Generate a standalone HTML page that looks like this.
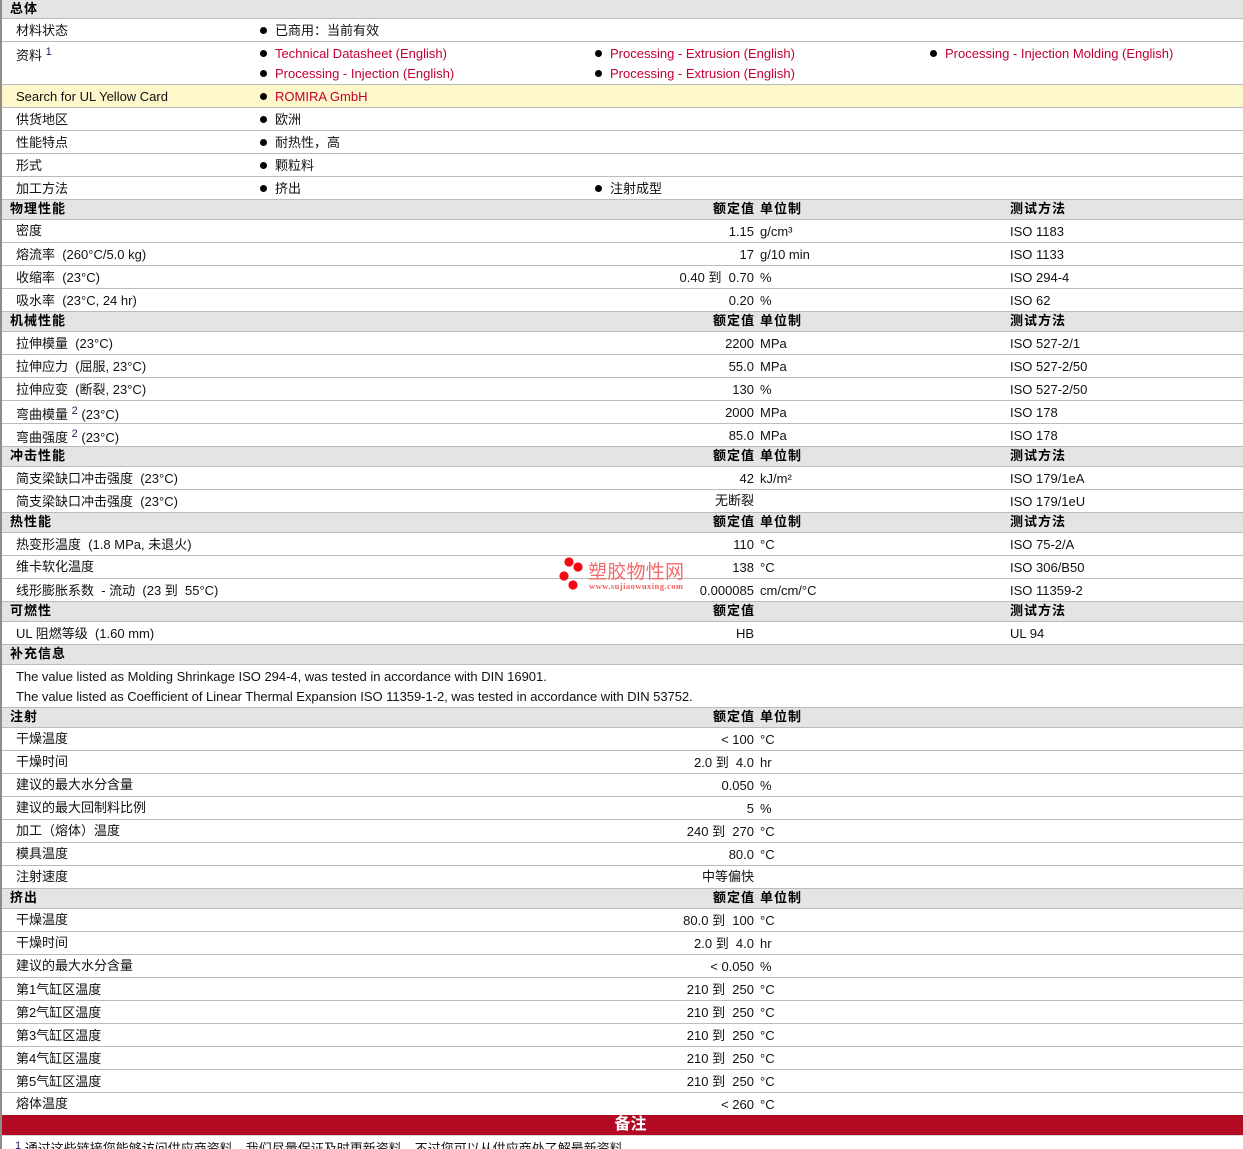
<!DOCTYPE html>
<html><head><meta charset="utf-8"><style>
html,body{margin:0;padding:0;background:#fff}
#p{position:relative;width:1243px;height:1149px;overflow:hidden;background:#fff;font:13px/22px "Liberation Sans","WenQuanYi Zen Hei","Noto Sans CJK SC",sans-serif;color:#111}
#b{position:absolute;left:0;top:0;width:2px;height:1149px;background:#8e8e86;z-index:5}
.r{position:absolute;left:2px;right:0;border-bottom:1px solid #bbb;box-sizing:border-box;white-space:pre}
.h{background:#e4e4e4;font-weight:bold;color:#000;letter-spacing:1px}
.r>span{position:absolute;top:1px}
.h>span,.r>.k{top:0}
.l{left:14px}.t{left:8px}
.v{right:489px;text-align:right}
.h>.v{right:488px}
.u{left:758px}.m{left:1008px}
.c1{left:273px}.c2{left:608px}.c3{left:943px}
i.d{position:absolute;width:7px;height:7px;border-radius:50%;background:#000}
a{color:#c20030;text-decoration:none}
sup{font-size:11px;line-height:0;vertical-align:5px;color:#1a1a66}
</style></head><body><div id="p">
<div id="b"></div>

<div class="r h" style="top:0;height:19px;line-height:17px"><span class="t">总体</span></div>
<div class="r" style="top:19px;height:23px"><span class="l">材料状态</span><i class="d" style="left:258px;top:8px"></i><span class="c1">已商用：当前有效</span></div>
<div class="r" style="top:42px;height:43px"><span class="l" style="top:3px">资料 <sup>1</sup></span><i class="d" style="left:258px;top:8px"></i><span class="c1"><a>Technical Datasheet (English)</a></span><i class="d" style="left:593px;top:8px"></i><span class="c2"><a>Processing - Extrusion (English)</a></span><i class="d" style="left:928px;top:8px"></i><span class="c3"><a>Processing - Injection Molding (English)</a></span><i class="d" style="left:258px;top:28px"></i><span class="c1" style="top:21px"><a>Processing - Injection (English)</a></span><i class="d" style="left:593px;top:28px"></i><span class="c2" style="top:21px"><a>Processing - Extrusion (English)</a></span></div>
<div class="r" style="top:85px;height:23px;background:#fdf7cb"><span class="l">Search for UL Yellow Card</span><i class="d" style="left:258px;top:8px"></i><span class="c1"><a>ROMIRA GmbH</a></span></div>
<div class="r" style="top:108px;height:23px"><span class="l">供货地区</span><i class="d" style="left:258px;top:8px"></i><span class="c1">欧洲</span></div>
<div class="r" style="top:131px;height:23px"><span class="l">性能特点</span><i class="d" style="left:258px;top:8px"></i><span class="c1">耐热性，高</span></div>
<div class="r" style="top:154px;height:23px"><span class="l">形式</span><i class="d" style="left:258px;top:8px"></i><span class="c1">颗粒料</span></div>
<div class="r" style="top:177px;height:23px"><span class="l">加工方法</span><i class="d" style="left:258px;top:8px"></i><span class="c1">挤出</span><i class="d" style="left:593px;top:8px"></i><span class="c2">注射成型</span></div>

<div class="r h" style="top:200px;height:20px;line-height:18px"><span class="t">物理性能</span><span class="v">额定值</span><span class="u">单位制</span><span class="m">测试方法</span></div>
<div class="r" style="top:220px;height:23px"><span class="l k">密度</span><span class="v">1.15</span><span class="u">g/cm³</span><span class="m">ISO 1183</span></div>
<div class="r" style="top:243px;height:23px"><span class="l">熔流率  (260°C/5.0 kg)</span><span class="v">17</span><span class="u">g/10 min</span><span class="m">ISO 1133</span></div>
<div class="r" style="top:266px;height:23px"><span class="l">收缩率  (23°C)</span><span class="v">0.40 到  0.70</span><span class="u">%</span><span class="m">ISO 294-4</span></div>
<div class="r" style="top:289px;height:23px"><span class="l">吸水率  (23°C, 24 hr)</span><span class="v">0.20</span><span class="u">%</span><span class="m">ISO 62</span></div>

<div class="r h" style="top:312px;height:20px;line-height:18px"><span class="t">机械性能</span><span class="v">额定值</span><span class="u">单位制</span><span class="m">测试方法</span></div>
<div class="r" style="top:332px;height:23px"><span class="l">拉伸模量  (23°C)</span><span class="v">2200</span><span class="u">MPa</span><span class="m">ISO 527-2/1</span></div>
<div class="r" style="top:355px;height:23px"><span class="l">拉伸应力  (屈服, 23°C)</span><span class="v">55.0</span><span class="u">MPa</span><span class="m">ISO 527-2/50</span></div>
<div class="r" style="top:378px;height:23px"><span class="l">拉伸应变  (断裂, 23°C)</span><span class="v">130</span><span class="u">%</span><span class="m">ISO 527-2/50</span></div>
<div class="r" style="top:401px;height:23px"><span class="l" style="top:3px">弯曲模量 <sup>2</sup> (23°C)</span><span class="v">2000</span><span class="u">MPa</span><span class="m">ISO 178</span></div>
<div class="r" style="top:424px;height:23px"><span class="l" style="top:3px">弯曲强度 <sup>2</sup> (23°C)</span><span class="v">85.0</span><span class="u">MPa</span><span class="m">ISO 178</span></div>

<div class="r h" style="top:447px;height:20px;line-height:18px"><span class="t">冲击性能</span><span class="v">额定值</span><span class="u">单位制</span><span class="m">测试方法</span></div>
<div class="r" style="top:467px;height:23px"><span class="l">简支梁缺口冲击强度  (23°C)</span><span class="v">42</span><span class="u">kJ/m²</span><span class="m">ISO 179/1eA</span></div>
<div class="r" style="top:490px;height:23px"><span class="l">简支梁缺口冲击强度  (23°C)</span><span class="v k">无断裂</span><span class="m">ISO 179/1eU</span></div>

<div class="r h" style="top:513px;height:20px;line-height:18px"><span class="t">热性能</span><span class="v">额定值</span><span class="u">单位制</span><span class="m">测试方法</span></div>
<div class="r" style="top:533px;height:23px"><span class="l">热变形温度  (1.8 MPa, 未退火)</span><span class="v">110</span><span class="u">°C</span><span class="m">ISO 75-2/A</span></div>
<div class="r" style="top:556px;height:23px"><span class="l k">维卡软化温度</span><span class="v">138</span><span class="u">°C</span><span class="m">ISO 306/B50</span></div>
<div class="r" style="top:579px;height:23px"><span class="l">线形膨胀系数  - 流动  (23 到  55°C)</span><span class="v">0.000085</span><span class="u">cm/cm/°C</span><span class="m">ISO 11359-2</span></div>

<div class="r h" style="top:602px;height:20px;line-height:18px"><span class="t">可燃性</span><span class="v">额定值</span><span class="m">测试方法</span></div>
<div class="r" style="top:622px;height:23px"><span class="l">UL 阻燃等级  (1.60 mm)</span><span class="v">HB</span><span class="m">UL 94</span></div>

<div class="r h" style="top:645px;height:20px;line-height:18px"><span class="t">补充信息</span></div>
<div class="r" style="top:665px;height:43px"><span class="l" style="letter-spacing:-.02px">The value listed as Molding Shrinkage ISO 294-4, was tested in accordance with DIN 16901.</span><span class="l" style="top:21px;letter-spacing:-.035px">The value listed as Coefficient of Linear Thermal Expansion ISO 11359-1-2, was tested in accordance with DIN 53752.</span></div>

<div class="r h" style="top:708px;height:20px;line-height:18px"><span class="t">注射</span><span class="v">额定值</span><span class="u">单位制</span></div>
<div class="r" style="top:728px;height:23px"><span class="l k">干燥温度</span><span class="v">&lt; 100</span><span class="u">°C</span></div>
<div class="r" style="top:751px;height:23px"><span class="l k">干燥时间</span><span class="v">2.0 到  4.0</span><span class="u">hr</span></div>
<div class="r" style="top:774px;height:23px"><span class="l k">建议的最大水分含量</span><span class="v">0.050</span><span class="u">%</span></div>
<div class="r" style="top:797px;height:23px"><span class="l k">建议的最大回制料比例</span><span class="v">5</span><span class="u">%</span></div>
<div class="r" style="top:820px;height:23px"><span class="l k">加工（熔体）温度</span><span class="v">240 到  270</span><span class="u">°C</span></div>
<div class="r" style="top:843px;height:23px"><span class="l k">模具温度</span><span class="v">80.0</span><span class="u">°C</span></div>
<div class="r" style="top:866px;height:23px"><span class="l k">注射速度</span><span class="v k">中等偏快</span></div>

<div class="r h" style="top:889px;height:20px;line-height:18px"><span class="t">挤出</span><span class="v">额定值</span><span class="u">单位制</span></div>
<div class="r" style="top:909px;height:23px"><span class="l k">干燥温度</span><span class="v">80.0 到  100</span><span class="u">°C</span></div>
<div class="r" style="top:932px;height:23px"><span class="l k">干燥时间</span><span class="v">2.0 到  4.0</span><span class="u">hr</span></div>
<div class="r" style="top:955px;height:23px"><span class="l k">建议的最大水分含量</span><span class="v">&lt; 0.050</span><span class="u">%</span></div>
<div class="r" style="top:978px;height:23px"><span class="l">第1气缸区温度</span><span class="v">210 到  250</span><span class="u">°C</span></div>
<div class="r" style="top:1001px;height:23px"><span class="l">第2气缸区温度</span><span class="v">210 到  250</span><span class="u">°C</span></div>
<div class="r" style="top:1024px;height:23px"><span class="l">第3气缸区温度</span><span class="v">210 到  250</span><span class="u">°C</span></div>
<div class="r" style="top:1047px;height:23px"><span class="l">第4气缸区温度</span><span class="v">210 到  250</span><span class="u">°C</span></div>
<div class="r" style="top:1070px;height:23px"><span class="l">第5气缸区温度</span><span class="v">210 到  250</span><span class="u">°C</span></div>
<div class="r" style="top:1093px;height:22px;border:0"><span class="l k">熔体温度</span><span class="v">&lt; 260</span><span class="u">°C</span></div>

<div style="position:absolute;left:2px;right:0;top:1115px;height:20px;background:#b30a24;color:#fff;text-align:center;font-size:16px;font-weight:bold;line-height:20px;padding-left:16px;box-sizing:border-box;border-bottom:0">备注</div>
<div style="position:absolute;left:2px;right:0;top:1135px;height:1px;background:#d8d8d8"></div>
<div style="position:absolute;left:15px;top:1138px;white-space:pre"><sup style="vertical-align:4px">1</sup> 通过这些链接您能够访问供应商资料。我们尽量保证及时更新资料，不过您可以从供应商处了解最新资料。</div>

<svg style="position:absolute;left:555px;top:553px" width="140" height="42" viewBox="0 0 140 42">
<circle cx="14" cy="9" r="4.6" fill="#f00a14"/><circle cx="23" cy="14" r="4.6" fill="#f00a14"/><circle cx="9" cy="23" r="4.6" fill="#f00a14"/><circle cx="18" cy="32" r="4.6" fill="#f00a14"/>
<text x="33" y="25" font-family="'WenQuanYi Zen Hei','Noto Sans CJK SC',sans-serif" font-size="19" fill="#f56a6a" textLength="96">塑胶物性网</text>
<text x="34" y="36" font-family="'Liberation Serif',serif" font-weight="bold" font-size="8.5" fill="#f46060" textLength="94">www.sujiaowuxing.com</text>
</svg>
</div></body></html>
